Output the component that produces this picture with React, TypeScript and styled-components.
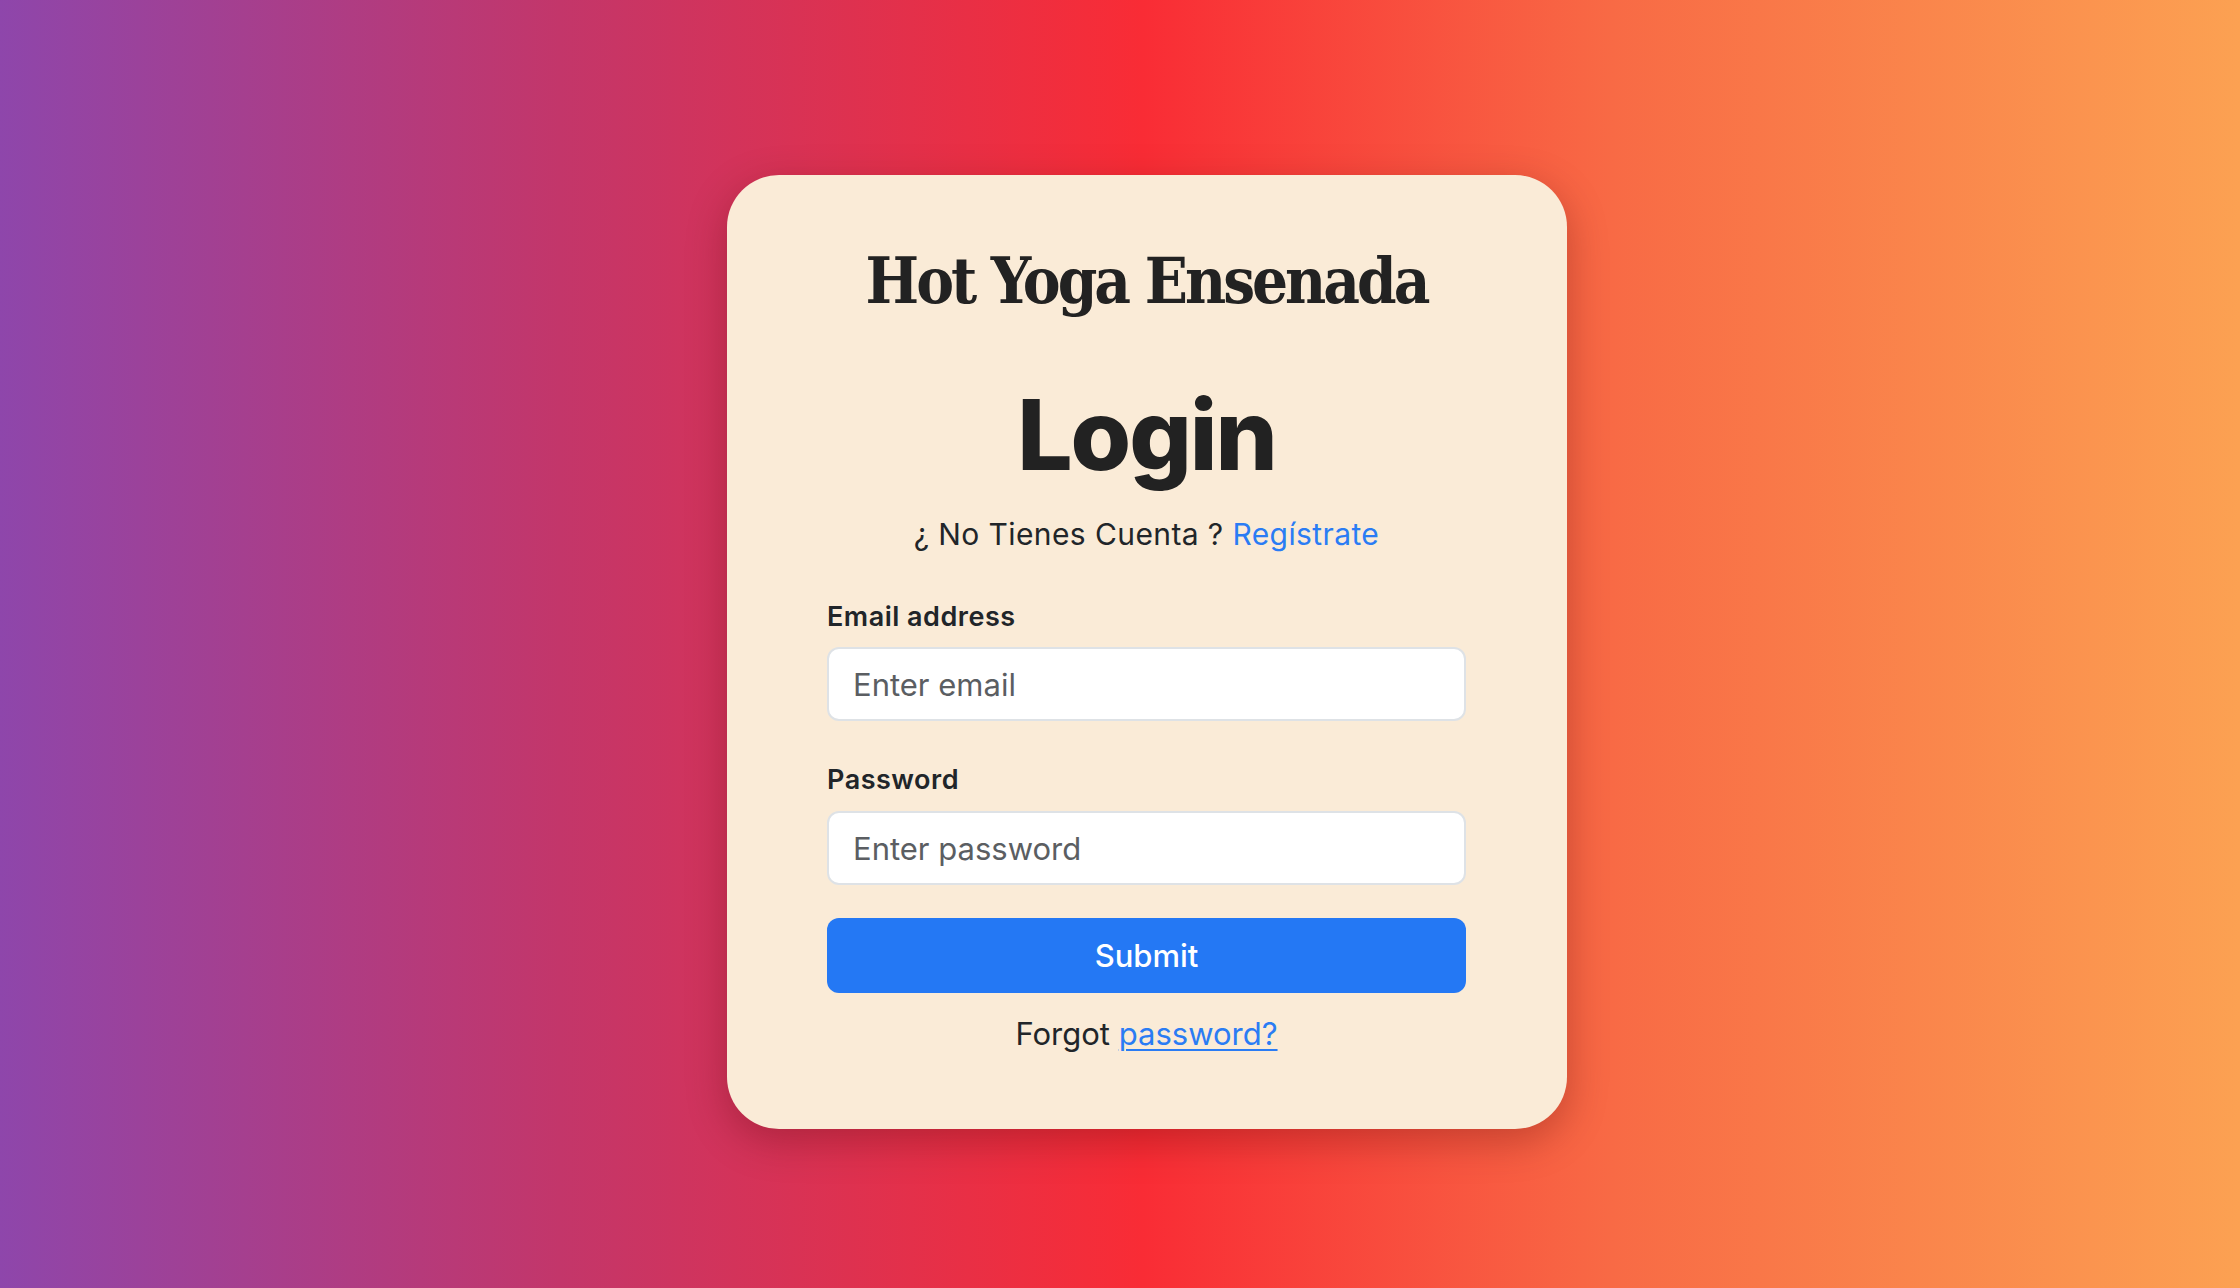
import React from "react";
import styled, { createGlobalStyle } from "styled-components";

const GlobalStyle = createGlobalStyle`
  html, body {
    margin: 0;
    padding: 0;
  }
  body {
    font-family: Inter, "Noto Sans", Roboto, sans-serif;
    color: #212529;
  }
  * { box-sizing: border-box; }
`;

const Page = styled.main`
  min-height: 100vh;
  width: 100%;
  display: flex;
  align-items: center;
  justify-content: center;
  padding: 16px 0 0 54px;
  background: linear-gradient(90deg, #8e46ab 0%, #c3366a 25%, #f92c35 51%, #f86a45 72%, #fca152 100%);
`;

const Card = styled.section`
  width: 840px;
  background: #faebd7;
  border-radius: 52px;
  padding: 69px 101px 71px 100px;
  box-shadow: 0 12px 40px rgba(60, 0, 0, 0.28);
  display: flex;
  flex-direction: column;
`;

const Brand = styled.h2`
  margin: 0;
  font-family: "DejaVu Serif Condensed", "DejaVu Serif", serif;
  font-stretch: condensed;
  font-weight: 700;
  font-size: 63px;
  line-height: 1.2;
  text-align: center;
  letter-spacing: -3px;
  color: #222222;
`;

const Title = styled.h1`
  margin: 56px 0 0;
  font-family: Inter, Roboto, sans-serif;
  font-weight: 800;
  font-size: 98px;
  line-height: 1.2;
  letter-spacing: -2px;
  text-align: center;
  color: #222222;
`;

const Note = styled.p`
  margin: 20px 0 0;
  font-size: 30px;
  line-height: 1.45;
  letter-spacing: 0.4px;
  text-align: center;
  color: #212529;
`;

const Link = styled.a<{ $underline?: boolean }>`
  color: #2a7cf4;
  text-decoration: ${(p) => (p.$underline ? "underline" : "none")};
  text-decoration-thickness: 2px;
  text-underline-offset: 4px;
`;

const Form = styled.form`
  display: flex;
  flex-direction: column;
  margin-top: 40px;
`;

const Field = styled.div<{ $gap: number }>`
  display: flex;
  flex-direction: column;
  gap: ${(p) => p.$gap}px;
  margin-bottom: 39px;
  &:last-of-type { margin-bottom: 33px; }
`;

const Label = styled.label`
  font-size: 27px;
  font-weight: 600;
  line-height: 1.45;
  letter-spacing: 0.5px;
  color: #212529;
`;

const Input = styled.input`
  height: 74px;
  width: 100%;
  border: 2px solid #dee2e6;
  border-radius: 12px;
  background: #ffffff;
  padding: 0 24px;
  font-family: Inter, Roboto, sans-serif;
  font-size: 31px;
  color: #212529;
  outline: none;
  &::placeholder { color: #5b5e62; }
`;

const Submit = styled.button`
  height: 75px;
  width: 100%;
  border: none;
  border-radius: 12px;
  background: #2478f4;
  color: #ffffff;
  font-family: Inter, Roboto, sans-serif;
  font-size: 31px;
  font-weight: 500;
  cursor: pointer;
`;

const Footer = styled.p`
  margin: 18px 0 0;
  font-size: 31px;
  line-height: 1.5;
  text-align: center;
  color: #212529;
`;

export default function App() {
  return (
    <>
      <GlobalStyle />
      <Page>
        <Card>
          <Brand>Hot Yoga Ensenada</Brand>
          <Title>Login</Title>
          <Note>
            ¿ No Tienes Cuenta ? <Link href="#">Regístrate</Link>
          </Note>
          <Form onSubmit={(e) => e.preventDefault()}>
            <Field $gap={11}>
              <Label htmlFor="email">Email address</Label>
              <Input id="email" type="email" placeholder="Enter email" />
            </Field>
            <Field $gap={12}>
              <Label htmlFor="password">Password</Label>
              <Input id="password" type="password" placeholder="Enter password" />
            </Field>
            <Submit type="submit">Submit</Submit>
          </Form>
          <Footer>
            Forgot <Link href="#" $underline>password?</Link>
          </Footer>
        </Card>
      </Page>
    </>
  );
}
